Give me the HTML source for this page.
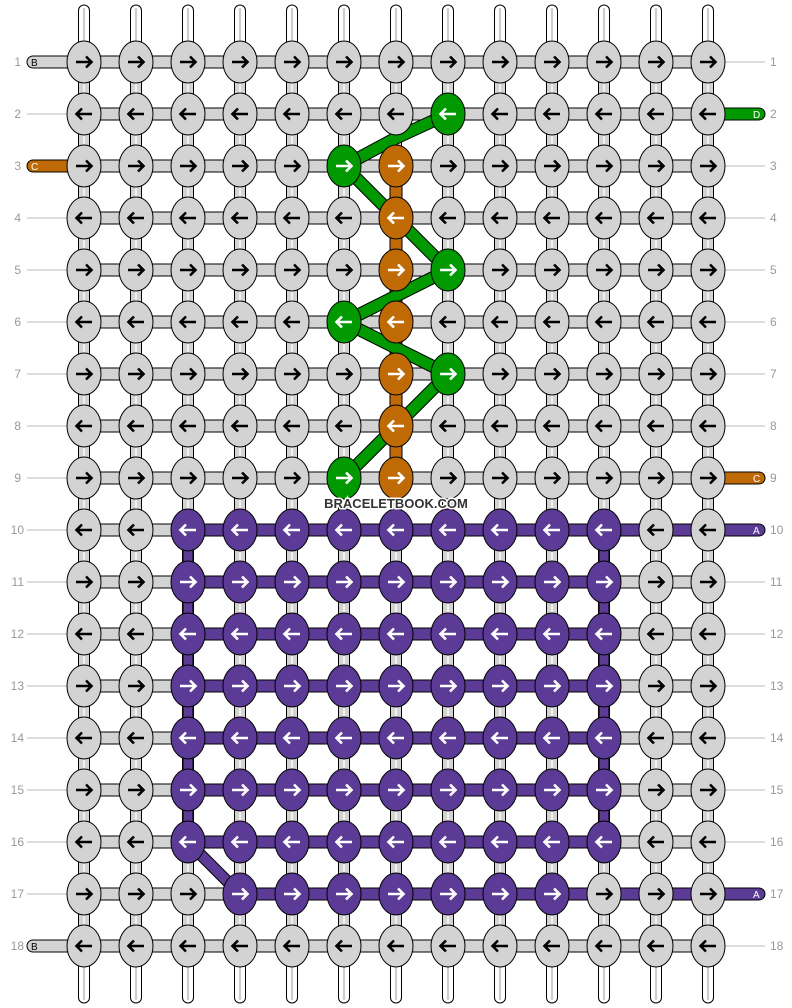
<!DOCTYPE html>
<html><head><meta charset="utf-8"><style>
html,body{margin:0;padding:0;background:#fff;width:792px;height:1008px;overflow:hidden}
svg{display:block}
text{font-family:"Liberation Sans",sans-serif}
</style></head><body>
<svg width="792" height="1008" viewBox="0 0 792 1008" xmlns="http://www.w3.org/2000/svg">
<defs>
<ellipse id="e" cx="0" cy="0" rx="17" ry="21" stroke="#000" stroke-width="1"/>
<path id="R" d="M-8,0H7M2,-5.5L7.5,0L2,5.5" fill="none" stroke-width="2.6"/>
<path id="L" d="M8,0H-7M-2,-5.5L-7.5,0L-2,5.5" fill="none" stroke-width="2.6"/>
<g id="vs"><rect x="-5.5" y="5" width="11" height="998" rx="5.5" fill="#fff" stroke="#000"/><rect x="-5" y="62" width="10" height="884" fill="#d3d3d3"/><line x1="0" y1="8" x2="0" y2="1000" stroke="#bbb" stroke-width="1.5"/><line x1="0" y1="62" x2="0" y2="946" stroke="#fff" stroke-width="1.5"/></g>
<rect id="hb" x="84" y="-6" width="624" height="12" fill="#d3d3d3" stroke="#000"/>
</defs>
<!-- vertical strings -->
<use href="#vs" x="84"/><use href="#vs" x="136"/><use href="#vs" x="188"/><use href="#vs" x="240"/><use href="#vs" x="292"/><use href="#vs" x="344"/><use href="#vs" x="396"/><use href="#vs" x="448"/><use href="#vs" x="500"/><use href="#vs" x="552"/><use href="#vs" x="604"/><use href="#vs" x="656"/><use href="#vs" x="708"/>
<!-- horizontal bars -->
<use href="#hb" y="62"/><use href="#hb" y="114"/><use href="#hb" y="166"/><use href="#hb" y="218"/><use href="#hb" y="270"/><use href="#hb" y="322"/><use href="#hb" y="374"/><use href="#hb" y="426"/><use href="#hb" y="478"/><use href="#hb" y="530"/><use href="#hb" y="582"/><use href="#hb" y="634"/><use href="#hb" y="686"/><use href="#hb" y="738"/><use href="#hb" y="790"/><use href="#hb" y="842"/><use href="#hb" y="894"/><use href="#hb" y="946"/>
<!-- side lines -->
<g stroke="#bbb" stroke-width="1">
<line x1="27" y1="114" x2="67" y2="114"/><line x1="27" y1="218" x2="67" y2="218"/><line x1="27" y1="270" x2="67" y2="270"/><line x1="27" y1="322" x2="67" y2="322"/><line x1="27" y1="374" x2="67" y2="374"/><line x1="27" y1="426" x2="67" y2="426"/><line x1="27" y1="478" x2="67" y2="478"/><line x1="27" y1="530" x2="67" y2="530"/><line x1="27" y1="582" x2="67" y2="582"/><line x1="27" y1="634" x2="67" y2="634"/><line x1="27" y1="686" x2="67" y2="686"/><line x1="27" y1="738" x2="67" y2="738"/><line x1="27" y1="790" x2="67" y2="790"/><line x1="27" y1="842" x2="67" y2="842"/><line x1="27" y1="894" x2="67" y2="894"/>
<line x1="725" y1="62" x2="765" y2="62"/><line x1="725" y1="166" x2="765" y2="166"/><line x1="725" y1="218" x2="765" y2="218"/><line x1="725" y1="270" x2="765" y2="270"/><line x1="725" y1="322" x2="765" y2="322"/><line x1="725" y1="374" x2="765" y2="374"/><line x1="725" y1="426" x2="765" y2="426"/><line x1="725" y1="582" x2="765" y2="582"/><line x1="725" y1="634" x2="765" y2="634"/><line x1="725" y1="686" x2="765" y2="686"/><line x1="725" y1="738" x2="765" y2="738"/><line x1="725" y1="790" x2="765" y2="790"/><line x1="725" y1="842" x2="765" y2="842"/><line x1="725" y1="946" x2="765" y2="946"/>
</g>
<!-- tabs -->
<rect x="27" y="56" width="57" height="12" rx="6" fill="#d3d3d3" stroke="#000"/>
<rect x="27" y="160" width="57" height="12" rx="6" fill="#c06a06" stroke="#000"/>
<rect x="27" y="940" width="57" height="12" rx="6" fill="#d3d3d3" stroke="#000"/>
<rect x="700" y="108" width="65" height="12" rx="6" fill="#009900" stroke="#000"/>
<rect x="700" y="472" width="65" height="12" rx="6" fill="#c06a06" stroke="#000"/>
<!-- purple horizontals -->
<g fill="#5b3b96" stroke="#000">
<rect x="188" y="524" width="577" height="12" rx="6"/>
<rect x="188" y="576" width="416" height="12"/>
<rect x="188" y="628" width="416" height="12"/>
<rect x="188" y="680" width="416" height="12"/>
<rect x="188" y="732" width="416" height="12"/>
<rect x="188" y="784" width="416" height="12"/>
<rect x="188" y="836" width="416" height="12"/>
<rect x="240" y="888" width="525" height="12" rx="6"/>
<rect x="183" y="530" width="10" height="312"/>
<rect x="599" y="530" width="10" height="312"/>
</g>
<line x1="188" y1="842" x2="240" y2="894" stroke="#000" stroke-width="12"/>
<line x1="188" y1="842" x2="240" y2="894" stroke="#5b3b96" stroke-width="10"/>
<!-- orange vertical -->
<rect x="390" y="166" width="12" height="312" fill="#c06a06" stroke="#000"/>
<!-- green path -->
<polyline points="448,114 396,138 344,166 448,270 344,322 448,374 344,478" fill="none" stroke="#000" stroke-width="13" stroke-linejoin="round"/>
<polyline points="448,114 396,138 344,166 448,270 344,322 448,374 344,478" fill="none" stroke="#009900" stroke-width="11" stroke-linejoin="round"/>
<!-- knots gray -->
<g fill="#d3d3d3">
<use href="#e" x="84" y="62"/><use href="#e" x="136" y="62"/><use href="#e" x="188" y="62"/><use href="#e" x="240" y="62"/><use href="#e" x="292" y="62"/><use href="#e" x="344" y="62"/><use href="#e" x="396" y="62"/><use href="#e" x="448" y="62"/><use href="#e" x="500" y="62"/><use href="#e" x="552" y="62"/><use href="#e" x="604" y="62"/><use href="#e" x="656" y="62"/><use href="#e" x="708" y="62"/>
<use href="#e" x="84" y="114"/><use href="#e" x="136" y="114"/><use href="#e" x="188" y="114"/><use href="#e" x="240" y="114"/><use href="#e" x="292" y="114"/><use href="#e" x="344" y="114"/><use href="#e" x="396" y="114"/><use href="#e" x="500" y="114"/><use href="#e" x="552" y="114"/><use href="#e" x="604" y="114"/><use href="#e" x="656" y="114"/><use href="#e" x="708" y="114"/>
<use href="#e" x="84" y="166"/><use href="#e" x="136" y="166"/><use href="#e" x="188" y="166"/><use href="#e" x="240" y="166"/><use href="#e" x="292" y="166"/><use href="#e" x="448" y="166"/><use href="#e" x="500" y="166"/><use href="#e" x="552" y="166"/><use href="#e" x="604" y="166"/><use href="#e" x="656" y="166"/><use href="#e" x="708" y="166"/>
<use href="#e" x="84" y="218"/><use href="#e" x="136" y="218"/><use href="#e" x="188" y="218"/><use href="#e" x="240" y="218"/><use href="#e" x="292" y="218"/><use href="#e" x="344" y="218"/><use href="#e" x="448" y="218"/><use href="#e" x="500" y="218"/><use href="#e" x="552" y="218"/><use href="#e" x="604" y="218"/><use href="#e" x="656" y="218"/><use href="#e" x="708" y="218"/>
<use href="#e" x="84" y="270"/><use href="#e" x="136" y="270"/><use href="#e" x="188" y="270"/><use href="#e" x="240" y="270"/><use href="#e" x="292" y="270"/><use href="#e" x="344" y="270"/><use href="#e" x="500" y="270"/><use href="#e" x="552" y="270"/><use href="#e" x="604" y="270"/><use href="#e" x="656" y="270"/><use href="#e" x="708" y="270"/>
<use href="#e" x="84" y="322"/><use href="#e" x="136" y="322"/><use href="#e" x="188" y="322"/><use href="#e" x="240" y="322"/><use href="#e" x="292" y="322"/><use href="#e" x="448" y="322"/><use href="#e" x="500" y="322"/><use href="#e" x="552" y="322"/><use href="#e" x="604" y="322"/><use href="#e" x="656" y="322"/><use href="#e" x="708" y="322"/>
<use href="#e" x="84" y="374"/><use href="#e" x="136" y="374"/><use href="#e" x="188" y="374"/><use href="#e" x="240" y="374"/><use href="#e" x="292" y="374"/><use href="#e" x="344" y="374"/><use href="#e" x="500" y="374"/><use href="#e" x="552" y="374"/><use href="#e" x="604" y="374"/><use href="#e" x="656" y="374"/><use href="#e" x="708" y="374"/>
<use href="#e" x="84" y="426"/><use href="#e" x="136" y="426"/><use href="#e" x="188" y="426"/><use href="#e" x="240" y="426"/><use href="#e" x="292" y="426"/><use href="#e" x="344" y="426"/><use href="#e" x="448" y="426"/><use href="#e" x="500" y="426"/><use href="#e" x="552" y="426"/><use href="#e" x="604" y="426"/><use href="#e" x="656" y="426"/><use href="#e" x="708" y="426"/>
<use href="#e" x="84" y="478"/><use href="#e" x="136" y="478"/><use href="#e" x="188" y="478"/><use href="#e" x="240" y="478"/><use href="#e" x="292" y="478"/><use href="#e" x="448" y="478"/><use href="#e" x="500" y="478"/><use href="#e" x="552" y="478"/><use href="#e" x="604" y="478"/><use href="#e" x="656" y="478"/><use href="#e" x="708" y="478"/>
<use href="#e" x="84" y="530"/><use href="#e" x="136" y="530"/><use href="#e" x="656" y="530"/><use href="#e" x="708" y="530"/>
<use href="#e" x="84" y="582"/><use href="#e" x="136" y="582"/><use href="#e" x="656" y="582"/><use href="#e" x="708" y="582"/>
<use href="#e" x="84" y="634"/><use href="#e" x="136" y="634"/><use href="#e" x="656" y="634"/><use href="#e" x="708" y="634"/>
<use href="#e" x="84" y="686"/><use href="#e" x="136" y="686"/><use href="#e" x="656" y="686"/><use href="#e" x="708" y="686"/>
<use href="#e" x="84" y="738"/><use href="#e" x="136" y="738"/><use href="#e" x="656" y="738"/><use href="#e" x="708" y="738"/>
<use href="#e" x="84" y="790"/><use href="#e" x="136" y="790"/><use href="#e" x="656" y="790"/><use href="#e" x="708" y="790"/>
<use href="#e" x="84" y="842"/><use href="#e" x="136" y="842"/><use href="#e" x="656" y="842"/><use href="#e" x="708" y="842"/>
<use href="#e" x="84" y="894"/><use href="#e" x="136" y="894"/><use href="#e" x="188" y="894"/><use href="#e" x="604" y="894"/><use href="#e" x="656" y="894"/><use href="#e" x="708" y="894"/>
<use href="#e" x="84" y="946"/><use href="#e" x="136" y="946"/><use href="#e" x="188" y="946"/><use href="#e" x="240" y="946"/><use href="#e" x="292" y="946"/><use href="#e" x="344" y="946"/><use href="#e" x="396" y="946"/><use href="#e" x="448" y="946"/><use href="#e" x="500" y="946"/><use href="#e" x="552" y="946"/><use href="#e" x="604" y="946"/><use href="#e" x="656" y="946"/><use href="#e" x="708" y="946"/>
</g>
<g fill="#009900"><use href="#e" x="448" y="114"/><use href="#e" x="344" y="166"/><use href="#e" x="448" y="270"/><use href="#e" x="344" y="322"/><use href="#e" x="448" y="374"/><use href="#e" x="344" y="478"/></g>
<g fill="#c06a06"><use href="#e" x="396" y="166"/><use href="#e" x="396" y="218"/><use href="#e" x="396" y="270"/><use href="#e" x="396" y="322"/><use href="#e" x="396" y="374"/><use href="#e" x="396" y="426"/><use href="#e" x="396" y="478"/></g>
<g fill="#5b3b96">
<use href="#e" x="188" y="530"/><use href="#e" x="240" y="530"/><use href="#e" x="292" y="530"/><use href="#e" x="344" y="530"/><use href="#e" x="396" y="530"/><use href="#e" x="448" y="530"/><use href="#e" x="500" y="530"/><use href="#e" x="552" y="530"/><use href="#e" x="604" y="530"/>
<use href="#e" x="188" y="582"/><use href="#e" x="240" y="582"/><use href="#e" x="292" y="582"/><use href="#e" x="344" y="582"/><use href="#e" x="396" y="582"/><use href="#e" x="448" y="582"/><use href="#e" x="500" y="582"/><use href="#e" x="552" y="582"/><use href="#e" x="604" y="582"/>
<use href="#e" x="188" y="634"/><use href="#e" x="240" y="634"/><use href="#e" x="292" y="634"/><use href="#e" x="344" y="634"/><use href="#e" x="396" y="634"/><use href="#e" x="448" y="634"/><use href="#e" x="500" y="634"/><use href="#e" x="552" y="634"/><use href="#e" x="604" y="634"/>
<use href="#e" x="188" y="686"/><use href="#e" x="240" y="686"/><use href="#e" x="292" y="686"/><use href="#e" x="344" y="686"/><use href="#e" x="396" y="686"/><use href="#e" x="448" y="686"/><use href="#e" x="500" y="686"/><use href="#e" x="552" y="686"/><use href="#e" x="604" y="686"/>
<use href="#e" x="188" y="738"/><use href="#e" x="240" y="738"/><use href="#e" x="292" y="738"/><use href="#e" x="344" y="738"/><use href="#e" x="396" y="738"/><use href="#e" x="448" y="738"/><use href="#e" x="500" y="738"/><use href="#e" x="552" y="738"/><use href="#e" x="604" y="738"/>
<use href="#e" x="188" y="790"/><use href="#e" x="240" y="790"/><use href="#e" x="292" y="790"/><use href="#e" x="344" y="790"/><use href="#e" x="396" y="790"/><use href="#e" x="448" y="790"/><use href="#e" x="500" y="790"/><use href="#e" x="552" y="790"/><use href="#e" x="604" y="790"/>
<use href="#e" x="188" y="842"/><use href="#e" x="240" y="842"/><use href="#e" x="292" y="842"/><use href="#e" x="344" y="842"/><use href="#e" x="396" y="842"/><use href="#e" x="448" y="842"/><use href="#e" x="500" y="842"/><use href="#e" x="552" y="842"/><use href="#e" x="604" y="842"/>
<use href="#e" x="240" y="894"/><use href="#e" x="292" y="894"/><use href="#e" x="344" y="894"/><use href="#e" x="396" y="894"/><use href="#e" x="448" y="894"/><use href="#e" x="500" y="894"/><use href="#e" x="552" y="894"/>
</g>
<!-- arrows black (gray knots) -->
<g stroke="#000">
<use href="#R" x="84" y="62"/><use href="#R" x="136" y="62"/><use href="#R" x="188" y="62"/><use href="#R" x="240" y="62"/><use href="#R" x="292" y="62"/><use href="#R" x="344" y="62"/><use href="#R" x="396" y="62"/><use href="#R" x="448" y="62"/><use href="#R" x="500" y="62"/><use href="#R" x="552" y="62"/><use href="#R" x="604" y="62"/><use href="#R" x="656" y="62"/><use href="#R" x="708" y="62"/>
<use href="#L" x="84" y="114"/><use href="#L" x="136" y="114"/><use href="#L" x="188" y="114"/><use href="#L" x="240" y="114"/><use href="#L" x="292" y="114"/><use href="#L" x="344" y="114"/><use href="#L" x="396" y="114"/><use href="#L" x="500" y="114"/><use href="#L" x="552" y="114"/><use href="#L" x="604" y="114"/><use href="#L" x="656" y="114"/><use href="#L" x="708" y="114"/>
<use href="#R" x="84" y="166"/><use href="#R" x="136" y="166"/><use href="#R" x="188" y="166"/><use href="#R" x="240" y="166"/><use href="#R" x="292" y="166"/><use href="#R" x="448" y="166"/><use href="#R" x="500" y="166"/><use href="#R" x="552" y="166"/><use href="#R" x="604" y="166"/><use href="#R" x="656" y="166"/><use href="#R" x="708" y="166"/>
<use href="#L" x="84" y="218"/><use href="#L" x="136" y="218"/><use href="#L" x="188" y="218"/><use href="#L" x="240" y="218"/><use href="#L" x="292" y="218"/><use href="#L" x="344" y="218"/><use href="#L" x="448" y="218"/><use href="#L" x="500" y="218"/><use href="#L" x="552" y="218"/><use href="#L" x="604" y="218"/><use href="#L" x="656" y="218"/><use href="#L" x="708" y="218"/>
<use href="#R" x="84" y="270"/><use href="#R" x="136" y="270"/><use href="#R" x="188" y="270"/><use href="#R" x="240" y="270"/><use href="#R" x="292" y="270"/><use href="#R" x="344" y="270"/><use href="#R" x="500" y="270"/><use href="#R" x="552" y="270"/><use href="#R" x="604" y="270"/><use href="#R" x="656" y="270"/><use href="#R" x="708" y="270"/>
<use href="#L" x="84" y="322"/><use href="#L" x="136" y="322"/><use href="#L" x="188" y="322"/><use href="#L" x="240" y="322"/><use href="#L" x="292" y="322"/><use href="#L" x="448" y="322"/><use href="#L" x="500" y="322"/><use href="#L" x="552" y="322"/><use href="#L" x="604" y="322"/><use href="#L" x="656" y="322"/><use href="#L" x="708" y="322"/>
<use href="#R" x="84" y="374"/><use href="#R" x="136" y="374"/><use href="#R" x="188" y="374"/><use href="#R" x="240" y="374"/><use href="#R" x="292" y="374"/><use href="#R" x="344" y="374"/><use href="#R" x="500" y="374"/><use href="#R" x="552" y="374"/><use href="#R" x="604" y="374"/><use href="#R" x="656" y="374"/><use href="#R" x="708" y="374"/>
<use href="#L" x="84" y="426"/><use href="#L" x="136" y="426"/><use href="#L" x="188" y="426"/><use href="#L" x="240" y="426"/><use href="#L" x="292" y="426"/><use href="#L" x="344" y="426"/><use href="#L" x="448" y="426"/><use href="#L" x="500" y="426"/><use href="#L" x="552" y="426"/><use href="#L" x="604" y="426"/><use href="#L" x="656" y="426"/><use href="#L" x="708" y="426"/>
<use href="#R" x="84" y="478"/><use href="#R" x="136" y="478"/><use href="#R" x="188" y="478"/><use href="#R" x="240" y="478"/><use href="#R" x="292" y="478"/><use href="#R" x="448" y="478"/><use href="#R" x="500" y="478"/><use href="#R" x="552" y="478"/><use href="#R" x="604" y="478"/><use href="#R" x="656" y="478"/><use href="#R" x="708" y="478"/>
<use href="#L" x="84" y="530"/><use href="#L" x="136" y="530"/><use href="#L" x="656" y="530"/><use href="#L" x="708" y="530"/>
<use href="#R" x="84" y="582"/><use href="#R" x="136" y="582"/><use href="#R" x="656" y="582"/><use href="#R" x="708" y="582"/>
<use href="#L" x="84" y="634"/><use href="#L" x="136" y="634"/><use href="#L" x="656" y="634"/><use href="#L" x="708" y="634"/>
<use href="#R" x="84" y="686"/><use href="#R" x="136" y="686"/><use href="#R" x="656" y="686"/><use href="#R" x="708" y="686"/>
<use href="#L" x="84" y="738"/><use href="#L" x="136" y="738"/><use href="#L" x="656" y="738"/><use href="#L" x="708" y="738"/>
<use href="#R" x="84" y="790"/><use href="#R" x="136" y="790"/><use href="#R" x="656" y="790"/><use href="#R" x="708" y="790"/>
<use href="#L" x="84" y="842"/><use href="#L" x="136" y="842"/><use href="#L" x="656" y="842"/><use href="#L" x="708" y="842"/>
<use href="#R" x="84" y="894"/><use href="#R" x="136" y="894"/><use href="#R" x="188" y="894"/><use href="#R" x="604" y="894"/><use href="#R" x="656" y="894"/><use href="#R" x="708" y="894"/>
<use href="#L" x="84" y="946"/><use href="#L" x="136" y="946"/><use href="#L" x="188" y="946"/><use href="#L" x="240" y="946"/><use href="#L" x="292" y="946"/><use href="#L" x="344" y="946"/><use href="#L" x="396" y="946"/><use href="#L" x="448" y="946"/><use href="#L" x="500" y="946"/><use href="#L" x="552" y="946"/><use href="#L" x="604" y="946"/><use href="#L" x="656" y="946"/><use href="#L" x="708" y="946"/>
</g>
<!-- arrows white -->
<g stroke="#fff">
<use href="#L" x="448" y="114"/><use href="#R" x="344" y="166"/><use href="#R" x="396" y="166"/><use href="#L" x="396" y="218"/><use href="#R" x="396" y="270"/><use href="#R" x="448" y="270"/><use href="#L" x="344" y="322"/><use href="#L" x="396" y="322"/><use href="#R" x="396" y="374"/><use href="#R" x="448" y="374"/><use href="#L" x="396" y="426"/><use href="#R" x="344" y="478"/><use href="#R" x="396" y="478"/>
<use href="#L" x="188" y="530"/><use href="#L" x="240" y="530"/><use href="#L" x="292" y="530"/><use href="#L" x="344" y="530"/><use href="#L" x="396" y="530"/><use href="#L" x="448" y="530"/><use href="#L" x="500" y="530"/><use href="#L" x="552" y="530"/><use href="#L" x="604" y="530"/>
<use href="#R" x="188" y="582"/><use href="#R" x="240" y="582"/><use href="#R" x="292" y="582"/><use href="#R" x="344" y="582"/><use href="#R" x="396" y="582"/><use href="#R" x="448" y="582"/><use href="#R" x="500" y="582"/><use href="#R" x="552" y="582"/><use href="#R" x="604" y="582"/>
<use href="#L" x="188" y="634"/><use href="#L" x="240" y="634"/><use href="#L" x="292" y="634"/><use href="#L" x="344" y="634"/><use href="#L" x="396" y="634"/><use href="#L" x="448" y="634"/><use href="#L" x="500" y="634"/><use href="#L" x="552" y="634"/><use href="#L" x="604" y="634"/>
<use href="#R" x="188" y="686"/><use href="#R" x="240" y="686"/><use href="#R" x="292" y="686"/><use href="#R" x="344" y="686"/><use href="#R" x="396" y="686"/><use href="#R" x="448" y="686"/><use href="#R" x="500" y="686"/><use href="#R" x="552" y="686"/><use href="#R" x="604" y="686"/>
<use href="#L" x="188" y="738"/><use href="#L" x="240" y="738"/><use href="#L" x="292" y="738"/><use href="#L" x="344" y="738"/><use href="#L" x="396" y="738"/><use href="#L" x="448" y="738"/><use href="#L" x="500" y="738"/><use href="#L" x="552" y="738"/><use href="#L" x="604" y="738"/>
<use href="#R" x="188" y="790"/><use href="#R" x="240" y="790"/><use href="#R" x="292" y="790"/><use href="#R" x="344" y="790"/><use href="#R" x="396" y="790"/><use href="#R" x="448" y="790"/><use href="#R" x="500" y="790"/><use href="#R" x="552" y="790"/><use href="#R" x="604" y="790"/>
<use href="#L" x="188" y="842"/><use href="#L" x="240" y="842"/><use href="#L" x="292" y="842"/><use href="#L" x="344" y="842"/><use href="#L" x="396" y="842"/><use href="#L" x="448" y="842"/><use href="#L" x="500" y="842"/><use href="#L" x="552" y="842"/><use href="#L" x="604" y="842"/>
<use href="#R" x="240" y="894"/><use href="#R" x="292" y="894"/><use href="#R" x="344" y="894"/><use href="#R" x="396" y="894"/><use href="#R" x="448" y="894"/><use href="#R" x="500" y="894"/><use href="#R" x="552" y="894"/>
</g>
<!-- tab letters -->
<g font-size="10">
<text x="31" y="66" fill="#000">B</text>
<text x="31" y="170" fill="#fff">C</text>
<text x="31" y="950" fill="#000">B</text>
<text x="753" y="118" fill="#fff">D</text>
<text x="753" y="482" fill="#fff">C</text>
<text x="753" y="534" fill="#fff">A</text>
<text x="753" y="898" fill="#fff">A</text>
</g>
<!-- row numbers -->
<g font-size="12" fill="#999" text-anchor="end">
<text x="21" y="66">1</text><text x="21" y="118">2</text><text x="21" y="170">3</text><text x="21" y="222">4</text><text x="21" y="274">5</text><text x="21" y="326">6</text><text x="21" y="378">7</text><text x="21" y="430">8</text><text x="21" y="482">9</text><text x="24" y="534">10</text><text x="24" y="586">11</text><text x="24" y="638">12</text><text x="24" y="690">13</text><text x="24" y="742">14</text><text x="24" y="794">15</text><text x="24" y="846">16</text><text x="24" y="898">17</text><text x="24" y="950">18</text>
</g>
<g font-size="12" fill="#999">
<text x="770" y="66">1</text><text x="770" y="118">2</text><text x="770" y="170">3</text><text x="770" y="222">4</text><text x="770" y="274">5</text><text x="770" y="326">6</text><text x="770" y="378">7</text><text x="770" y="430">8</text><text x="770" y="482">9</text><text x="770" y="534">10</text><text x="770" y="586">11</text><text x="770" y="638">12</text><text x="770" y="690">13</text><text x="770" y="742">14</text><text x="770" y="794">15</text><text x="770" y="846">16</text><text x="770" y="898">17</text><text x="770" y="950">18</text>
</g>
<text x="396" y="508" font-size="13" font-weight="bold" fill="#333" text-anchor="middle" stroke="#fff" stroke-width="3" paint-order="stroke">BRACELETBOOK.COM</text>
</svg>
</body></html>
